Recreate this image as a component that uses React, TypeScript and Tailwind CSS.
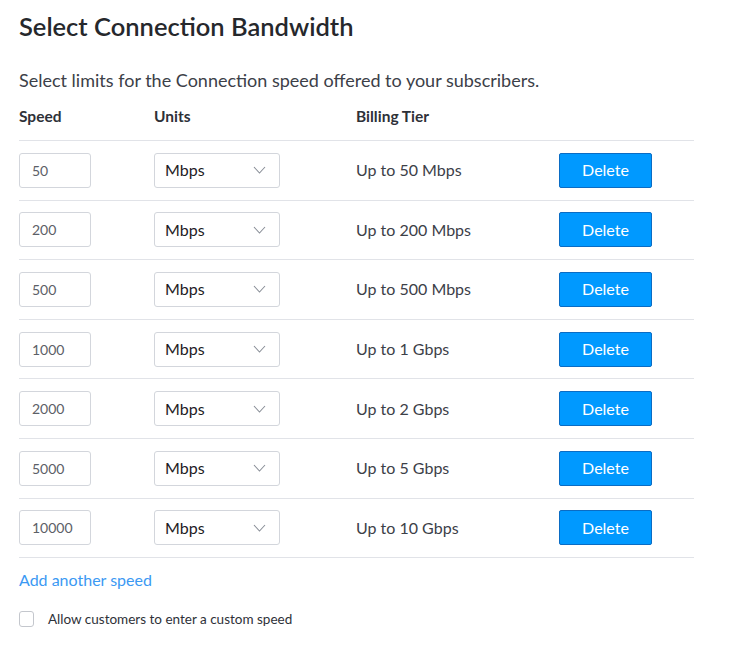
const rows = [
  { speed: "50", tier: "Up to 50 Mbps" },
  { speed: "200", tier: "Up to 200 Mbps" },
  { speed: "500", tier: "Up to 500 Mbps" },
  { speed: "1000", tier: "Up to 1 Gbps" },
  { speed: "2000", tier: "Up to 2 Gbps" },
  { speed: "5000", tier: "Up to 5 Gbps" },
  { speed: "10000", tier: "Up to 10 Gbps" },
];

function Chevron() {
  return (
    <svg width="13" height="8" viewBox="0 0 13 8" fill="none" className="text-[#8a8f98]">
      <path d="M1 1l5.5 6L12 1" stroke="currentColor" strokeWidth="1.1" />
    </svg>
  );
}

export default function App() {
  return (
    <div className="min-h-screen bg-white px-[19px] pt-[10px] text-[#333841] font-['Lato','Noto_Sans',sans-serif]">
      <h1 className="text-[25.5px] font-semibold leading-[32px] text-[#26282c]">Select Connection Bandwidth</h1>
      <p className="mt-[26px] text-[18px] leading-[24px] text-[#3c4048]">
        Select limits for the Connection speed offered to your subscribers.
      </p>

      <div className="w-[675px]">
        <div className="mt-[13px] grid h-[24px] grid-cols-[135px_202px_203px_1fr] items-center text-[15.5px] font-bold text-[#2e3138]">
          <span>Speed</span>
          <span>Units</span>
          <span>Billing Tier</span>
          <span></span>
        </div>
        <div className="mt-[11px] border-t border-[#e1e3e8]">
          {rows.map((r) => (
            <div
              key={r.speed}
              className="grid h-[59.6px] grid-cols-[135px_202px_203px_1fr] items-center border-b border-[#e1e3e8]"
            >
              <div className="flex h-[35px] w-[72px] items-center rounded-[3px] border border-[#d3d6dc] px-[12px] text-[14px] text-[#5c6067]">
                {r.speed}
              </div>
              <div className="flex h-[35px] w-[126px] items-center justify-between rounded-[3px] border border-[#d3d6dc] pl-[10px] pr-[13px] text-[16px] text-[#1e2024]">
                <span>Mbps</span>
                <Chevron />
              </div>
              <span className="text-[16px] text-[#3c4048]">{r.tier}</span>
              <button className="h-[35px] w-[93px] rounded-[2px] border border-[#0a6cc4] bg-[#0099ff] text-[16px] text-white">
                Delete
              </button>
            </div>
          ))}
        </div>
      </div>

      <a className="mt-[11px] block text-[16px] leading-[22px] text-[#3b99f3]">Add another speed</a>

      <label className="mt-[18px] flex items-center gap-[14px] text-[13.5px] text-[#2e3138]">
        <span className="h-[16px] w-[15px] rounded-[3px] border border-[#c4c7cd] bg-white"></span>
        Allow customers to enter a custom speed
      </label>
    </div>
  );
}
